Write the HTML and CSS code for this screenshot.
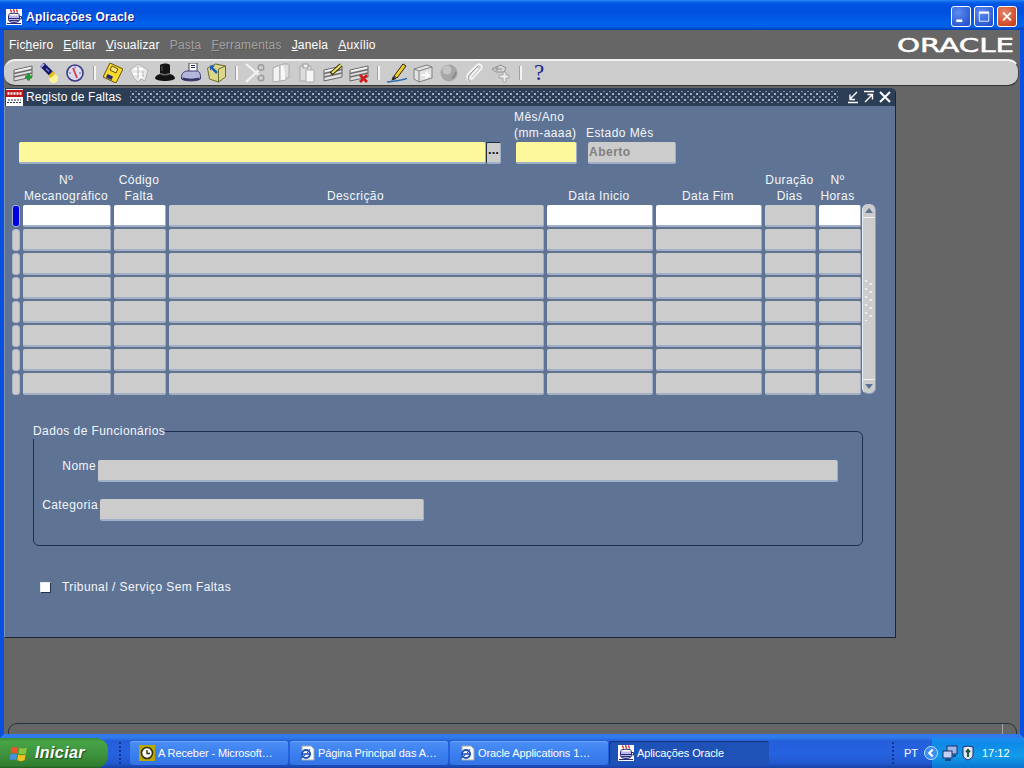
FILE: index.html
```html
<!DOCTYPE html>
<html lang="pt">
<head>
<meta charset="utf-8">
<title>Aplicações Oracle</title>
<link rel="stylesheet" href="styles.css">
</head>
<body>
<svg class="defs" width="0" height="0" aria-hidden="true">
  <defs>
    <symbol id="cup" viewBox="0 0 16 16">
      <rect width="16" height="16" fill="#fff"/>
      <path d="M5 .5c-1 1 1 1.500 0 3M8 0c-1 1 1 2 0 3.500M11 .5c-1 1 1 1.500 0 3" fill="none" stroke="#d01818" stroke-width="1.300"/>
      <ellipse cx="8" cy="6" rx="5.500" ry="1.800" fill="#fff" stroke="#2a2a78"/>
      <path d="M2.500 6.500v4c0 2 2.500 3 5.500 3s5.500-1 5.500-3v-4" fill="#b9b9ea" stroke="#2a2a78"/>
      <path d="M3 9.500h10M3.500 11.500h9" stroke="#2a2a78"/>
      <path d="M13.500 7.500h2V10h-2M1 14.500h14" fill="none" stroke="#2a2a78"/>
    </symbol>
    <symbol id="card" viewBox="0 0 20 20">
      <polygon points="1,7 19,3 19,14 1,18" fill="#e0e0e0" stroke="#68686c"/>
      <path d="M1 10.500 19 6.500M1 14 19 10" stroke="#6d6d72" stroke-width="1.300"/>
      <path d="M2 8 18 4.500" stroke="#fff"/>
    </symbol>
  </defs>
</svg>
<div class="screen">
  <header class="titlebar">
    <svg class="title-icon"><use href="#cup"/></svg>
    <span class="title-text">Aplicações Oracle</span>
    <div class="win-buttons">
      <span class="win-btn"><svg viewBox="0 0 21 21"><rect x="5" y="14" width="7" height="3" fill="#fff"/></svg></span>
      <span class="win-btn"><svg viewBox="0 0 21 21"><path d="M5 5.500h11v10.500H5z" fill="none" stroke="#fff"/><path d="M5 6h11" stroke="#fff" stroke-width="2.500"/></svg></span>
      <span class="win-btn win-close"><svg viewBox="0 0 21 21"><path d="M6 6l9 9M15 6l-9 9" stroke="#fff" stroke-width="2.200"/></svg></span>
    </div>
  </header>

  <div class="app">
    <nav class="menubar">
      <span class="menu-item">Fic<u>h</u>eiro</span>
      <span class="menu-item"><u>E</u>ditar</span>
      <span class="menu-item"><u>V</u>isualizar</span>
      <span class="menu-item menu-off">Pas<u>t</u>a</span>
      <span class="menu-item menu-off"><u>F</u>erramentas</span>
      <span class="menu-item"><u>J</u>anela</span>
      <span class="menu-item"><u>A</u>uxílio</span>
      <svg class="oracle-logo" viewBox="0 0 118 16"><text x="0" y="14.500" textLength="117" lengthAdjust="spacingAndGlyphs" font-family="DejaVu Sans" font-size="19.500" fill="#fff" stroke="#fff" stroke-width=".5">ORACLE</text></svg>
    </nav>

    <div class="toolbar">
      <span class="tool"><svg viewBox="0 0 20 20"><use href="#card"/><path d="M12 14h7M15.500 10.500v7" stroke="#1d9a2c" stroke-width="3"/></svg></span>
      <span class="tool"><svg viewBox="0 0 20 20"><circle cx="14.500" cy="15.500" r="4.500" fill="#f7f39a"/><path d="M3 1.500l10 10" stroke="#18186a" stroke-width="5.500"/><path d="M2 4l3-3" stroke="#a9a9e8" stroke-width="2"/><path d="M7 5.500l3 3" stroke="#7a7ad0" stroke-width="1.500"/><path d="M10.500 14l4.500-4.500" stroke="#e6c020" stroke-width="3.500"/></svg></span>
      <span class="tool"><svg viewBox="0 0 20 20"><circle cx="10" cy="10" r="8" fill="#dadcf0" stroke="#3a3a88" stroke-width="1.600"/><path d="M8 5l4 10" stroke="#d84848" stroke-width="2"/><path d="M4 10h2M14 10h2M10 3.500v2" stroke="#5a5a9c"/></svg></span>
      <span class="sep"></span>
      <span class="tool"><svg viewBox="0 0 20 20"><path d="M7 0l13 6-7 14-13-6z" fill="#f9d92e" stroke="#6a5208"/><path d="M9 3l6 3-2 4-6-3z" fill="#f6e878" stroke="#6a5208"/><path d="M4.500 11l5.500 2.500-1.500 3.500-5.500-2.500z" fill="#29297a"/></svg></span>
      <span class="tool"><svg viewBox="0 0 20 20"><path d="M1 7l8-6 10 6-3 11-4-2-3 3-4-4z" fill="#e8e8e8" stroke="#b4b4b4"/><path d="M5 6h9M4 11h11M9 14h5" stroke="#fff" stroke-width="2"/><path d="M9 3v12M14 8v6" stroke="#b0b0b0"/></svg></span>
      <span class="tool"><svg viewBox="0 0 20 20"><path d="M5 2c3-2 8-2 10 0v9c3 1 5 2.500 5 4 0 4-20 4-20 0 0-1.500 2-3 5-4z" fill="#141414"/><path d="M5 10.500c3 1.500 7 1.500 10 0" stroke="#666" stroke-width="1.500" fill="none"/><path d="M7 3v5" stroke="#444" stroke-width="1.500"/></svg></span>
      <span class="tool"><svg viewBox="0 0 20 20"><path d="M8 0h8v9H8z" fill="#fff" stroke="#444"/><path d="M10 2.500h4M10 4.500h4" stroke="#29297a"/><path d="M0.500 14c0-4 3-6 6-6h9c3 0 4 3 4 6v2c-3 2.500-16 2.500-19 0z" fill="#b4b6dc" stroke="#3a3a70"/><path d="M1.500 15.500c4 1.500 13 1.500 17 0" stroke="#303064" stroke-width="2" fill="none"/></svg></span>
      <span class="tool"><svg viewBox="0 0 20 20"><path d="M0.500 5l8-4 10 2v11l-7 5-9-3z" fill="#dcd88a" stroke="#6c6c2c"/><path d="M11.500 19V6l7-3" fill="none" stroke="#6c6c2c"/><path d="M4 4l6 6" stroke="#1f5fb0" stroke-width="2.500"/><path d="M8 2.500h-5v5z" fill="#1f5fb0"/></svg></span>
      <span class="sep"></span>
      <span class="tool"><svg viewBox="0 0 20 20"><path d="M1 1l14 12M1 19L15 6" stroke="#f2f2f2" stroke-width="2.200"/><circle cx="16" cy="15" r="2.800" fill="none" stroke="#9c9c9c" stroke-width="1.500"/><circle cx="16" cy="4.500" r="2.800" fill="none" stroke="#9c9c9c" stroke-width="1.500"/></svg></span>
      <span class="tool"><svg viewBox="0 0 20 20"><path d="M2 5l7-3v16l-7 1z" fill="#f2f2f2" stroke="#aaa"/><path d="M9 2l6-1v16l-6 1z" fill="#f8f8f8" stroke="#aaa"/><path d="M12 1h6v14h-3" fill="#ddd" stroke="#aaa"/></svg></span>
      <span class="tool"><svg viewBox="0 0 20 20"><path d="M3 3h11v15H3z" fill="#dcdcdc" stroke="#aaa"/><path d="M6 1h5v4H6z" fill="#eee" stroke="#999"/><path d="M9 7h8v12H9z" fill="#f6f6f6" stroke="#aaa"/></svg></span>
      <span class="tool"><svg viewBox="0 0 20 20"><use href="#card"/><path d="M8 11l10-9" stroke="#33330a" stroke-width="4"/><path d="M9 10l9-8" stroke="#f2e36a" stroke-width="2"/></svg></span>
      <span class="tool"><svg viewBox="0 0 20 20"><use href="#card"/><path d="M11 12l7 7M18 12l-7 7" stroke="#d01c1c" stroke-width="2.800"/></svg></span>
      <span class="sep"></span>
      <span class="tool"><svg viewBox="0 0 20 20"><path d="M7 13L16 1l3 2-9 12z" fill="#f0cb30" stroke="#2a2608"/><path d="M6 13l3.500 3-5 1.500z" fill="#222"/><path d="M0 19c6-1 13-1 20-3.500" stroke="#2d6bb0" stroke-width="1.400" fill="none"/></svg></span>
      <span class="tool"><svg viewBox="0 0 20 20"><path d="M1 6l13-4 5 2v11l-13 4-5-3z" fill="#e2e2e2" stroke="#808080"/><path d="M1 6l5 2 13-4M6 8v11" fill="none" stroke="#808080"/><path d="M8 12h8M12.500 9l3.500 3-3.500 3" fill="none" stroke="#fff" stroke-width="1.600"/></svg></span>
      <span class="tool"><svg viewBox="0 0 20 20"><circle cx="10" cy="10" r="8.500" fill="#a6a6a6"/><circle cx="8" cy="7" r="4.500" fill="#c4c4c4"/><path d="M13 15c2-1 3.500-3 3.500-6" stroke="#8a8a8a" stroke-width="2" fill="none"/></svg></span>
      <span class="tool"><svg viewBox="0 0 20 20"><path d="M4 18c-4-3-1-7 1-9l7-7c3-2 6 1 4 4l-8 9c-2 2-4 0-2-2l7-8" fill="none" stroke="#f4f4f4" stroke-width="1.800"/><path d="M5 19c-3-2-2-6 1-9l7-7" fill="none" stroke="#9c9c9c"/></svg></span>
      <span class="tool"><svg viewBox="0 0 20 20"><path d="M1 6l9-4 5 3-2 4H5z" fill="#d6d6d6" stroke="#8e8e8e"/><path d="M12 9h3v3h3v3h-3v4h-3v-4H8v-3h4z" fill="#ebebeb" stroke="#a4a4a4"/><path d="M4 6h7M6 3v5" stroke="#8e8e8e"/></svg></span>
      <span class="sep"></span>
      <span class="tool tool-help">?</span>
    </div>

    <section class="form-window">
      <div class="form-title">
        <svg class="form-icon" viewBox="0 0 17 17"><rect width="17" height="17" fill="#fff"/><rect y="1" width="17" height="7" fill="#c01818"/><path d="M1.500 4.500h14" stroke="#fff" stroke-width="2.500" stroke-dasharray="2 1"/><path d="M2 11h13M1 13.500h15" stroke="#30304a" stroke-dasharray="2 1"/></svg>
        <span class="form-caption">Registo de Faltas</span>
        <span class="form-dots"></span>
        <span class="form-ctl"><svg viewBox="0 0 16 14"><path d="M3 12.500h10M12 2 5.500 8.500M5 4.500v5h5" fill="none" stroke="#fff" stroke-width="1.400"/></svg></span>
        <span class="form-ctl"><svg viewBox="0 0 16 14"><path d="M3 1.500h10M4 12l7-7M6.500 4.500H11.500v5" fill="none" stroke="#fff" stroke-width="1.400"/></svg></span>
        <span class="form-ctl"><svg viewBox="0 0 16 14"><path d="M3 2l10 10M13 2 3 12" stroke="#fff" stroke-width="2"/></svg></span>
      </div>

      <div class="form-body">
        <div class="top-row">
          <div class="fld fld-req fld-main"></div>
          <div class="lov"><span class="lov-dots">...</span></div>
          <div class="stack stack-month">
            <span class="lbl">Mês/Ano</span>
            <span class="lbl">(mm-aaaa)</span>
            <div class="fld fld-req fld-month"></div>
          </div>
          <div class="stack stack-state">
            <span class="lbl">Estado Mês</span>
            <div class="fld fld-state">Aberto</div>
          </div>
        </div>

        <div class="grid">
          <div class="hd"></div>
          <div class="hd">Nº<br>Mecanográfico</div>
          <div class="hd">Código<br>Falta</div>
          <div class="hd">Descrição</div>
          <div class="hd">Data Inicio</div>
          <div class="hd">Data Fim</div>
          <div class="hd">Duração<br>Dias</div>
          <div class="hd hd-last">Nº<br>Horas</div>
          <div class="hd"></div>

          <div class="mark mark-on"></div><div class="fld fld-in"></div><div class="fld fld-in"></div><div class="fld"></div><div class="fld fld-in"></div><div class="fld fld-in"></div><div class="fld"></div><div class="fld fld-in"></div>
          <div class="scroll">
            <div class="scroll-btn scroll-up"><span class="arrow-up"></span></div>
            <div class="scroll-track"><span class="grip"></span></div>
            <div class="scroll-btn scroll-down"><span class="arrow-down"></span></div>
          </div>
          <div class="mark"></div><div class="fld"></div><div class="fld"></div><div class="fld"></div><div class="fld"></div><div class="fld"></div><div class="fld"></div><div class="fld"></div>
          <div class="mark"></div><div class="fld"></div><div class="fld"></div><div class="fld"></div><div class="fld"></div><div class="fld"></div><div class="fld"></div><div class="fld"></div>
          <div class="mark"></div><div class="fld"></div><div class="fld"></div><div class="fld"></div><div class="fld"></div><div class="fld"></div><div class="fld"></div><div class="fld"></div>
          <div class="mark"></div><div class="fld"></div><div class="fld"></div><div class="fld"></div><div class="fld"></div><div class="fld"></div><div class="fld"></div><div class="fld"></div>
          <div class="mark"></div><div class="fld"></div><div class="fld"></div><div class="fld"></div><div class="fld"></div><div class="fld"></div><div class="fld"></div><div class="fld"></div>
          <div class="mark"></div><div class="fld"></div><div class="fld"></div><div class="fld"></div><div class="fld"></div><div class="fld"></div><div class="fld"></div><div class="fld"></div>
          <div class="mark"></div><div class="fld"></div><div class="fld"></div><div class="fld"></div><div class="fld"></div><div class="fld"></div><div class="fld"></div><div class="fld"></div>
        </div>

        <fieldset class="group">
          <legend class="group-title">Dados de Funcionários</legend>
          <div class="group-row">
            <span class="lbl row-lbl row-lbl-nome">Nome</span>
            <div class="fld fld-nome"></div>
          </div>
          <div class="group-row group-row-cat">
            <span class="lbl row-lbl row-lbl-cat">Categoria</span>
            <div class="fld fld-cat"></div>
          </div>
        </fieldset>

        <div class="check-row">
          <span class="check"></span>
          <span class="lbl">Tribunal / Serviço Sem Faltas</span>
        </div>
      </div>
    </section>

    <div class="statusbar"><span class="status-cell"></span></div>
  </div>

  <footer class="taskbar">
    <div class="start">
      <svg class="start-logo" viewBox="0 0 18 18"><path d="M1 4c2-1.500 4-1.500 7-.5L7 9C4.500 8 3 8 .5 9z" fill="#e8562a"/><path d="M9 3.500c2.500 1 4.500 1 7 0L15 9c-2.500 1-4.500 1-7 0z" fill="#8cc63f"/><path d="M.2 10c2.500-1 4-1 6.600 0l-1 5.500C3.500 14.500 2 14.500 0 15.500z" fill="#4a8fe0"/><path d="M7.800 10c2.500 1 4.500 1 7 0l-1 5.500c-2.500 1-4.500 1-7 0z" fill="#f6c21c"/></svg>
      <span class="start-text">Iniciar</span>
    </div>
    <span class="grab"></span>
    <div class="task">
      <svg class="task-icon" viewBox="0 0 16 16"><rect width="16" height="16" fill="#b8a800"/><circle cx="8" cy="8" r="5.500" fill="#fff" stroke="#303010" stroke-width="1.600"/><path d="M8 5v3.500h3" fill="none" stroke="#303010" stroke-width="1.400"/></svg>
      <span class="task-text">A Receber - Microsoft…</span>
    </div>
    <div class="task">
      <svg class="task-icon" viewBox="0 0 16 16"><path d="M3 1h9l3 3v11H3z" fill="#fff" stroke="#9aa"/><circle cx="7" cy="9" r="4" fill="none" stroke="#1f4fb8" stroke-width="2"/><path d="M3 9h7" stroke="#1f4fb8" stroke-width="1.500"/><path d="M1 13c2 0 8-5 10-9" fill="none" stroke="#1f4fb8"/></svg>
      <span class="task-text">Página Principal das A…</span>
    </div>
    <div class="task">
      <svg class="task-icon" viewBox="0 0 16 16"><path d="M3 1h9l3 3v11H3z" fill="#fff" stroke="#9aa"/><circle cx="7" cy="9" r="4" fill="none" stroke="#1f4fb8" stroke-width="2"/><path d="M3 9h7" stroke="#1f4fb8" stroke-width="1.500"/><path d="M1 13c2 0 8-5 10-9" fill="none" stroke="#1f4fb8"/></svg>
      <span class="task-text">Oracle Applications 1…</span>
    </div>
    <div class="task task-on">
      <svg class="task-icon"><use href="#cup"/></svg>
      <span class="task-text">Aplicações Oracle</span>
    </div>
    <span class="grab grab-right"></span>
    <span class="lang">PT</span>
    <div class="tray">
      <span class="chevron"><svg viewBox="0 0 16 16"><circle cx="8" cy="8" r="7.500" fill="#3b8ff0" stroke="#cfe4ff"/><path d="M10 4 6 8l4 4" fill="none" stroke="#fff" stroke-width="2.400"/></svg></span>
      <svg class="tray-icon" viewBox="0 0 16 16"><rect x="5" y="1" width="10" height="8" fill="#9fb7e8" stroke="#1c2c6c"/><rect x="1" y="6" width="9" height="7" fill="#c3d2f2" stroke="#1c2c6c"/><path d="M3 15h6M11 11h3" stroke="#1c2c6c" stroke-width="1.500"/></svg>
      <svg class="tray-icon tray-shield" viewBox="0 0 12 16"><path d="M1 2l5-1 5 1v8c0 3-3 4-5 5-2-1-5-2-5-5z" fill="#dfe6f5" stroke="#1c2c6c"/><path d="M6 4v8M4 7l2-2 2 2" stroke="#1c5030" stroke-width="1.800" fill="none"/></svg>
      <span class="clock">17:12</span>
    </div>
  </footer>
</div>
</body>
</html>
```
FILE: styles.css
```css
* { box-sizing: border-box; }
html, body { margin: 0; padding: 0; }
body { font-family: "Liberation Sans", Arial, sans-serif; font-size: 12px; color: #fff; overflow: hidden; }
.defs { position: absolute; }

.screen { width: 1024px; height: 768px; display: flex; flex-direction: column; overflow: hidden; background: #666; }

/* XP title bar */
.titlebar {
  height: 30px; flex: none; display: flex; align-items: center; padding: 3px 7px 0 6px;
  background: linear-gradient(#2d8bf5 0, #0a62ea 2px, #0052e2 5px, #0050dd 12px, #0060ea 22px, #0062ea 26px, #0049c8 29px, #0040b8 30px);
}
.title-icon { width: 16px; height: 16px; flex: none; }
.title-text { margin-left: 4px; font-weight: bold; font-size: 12px; letter-spacing: .25px; color: #fff; text-shadow: 1px 1px #0f1089; }
.win-buttons { margin-left: auto; display: flex; gap: 3px; margin-top: -1px; }
.win-btn { width: 20px; height: 21px; border: 1px solid #fff; border-radius: 3px; background: radial-gradient(circle at 35% 30%, #5d8cf0, #2352d0 85%); display: block; }
.win-btn svg { display: block; width: 18px; height: 19px; }
.win-close { background: radial-gradient(circle at 35% 30%, #e8866a, #c8401c 85%); }

/* application frame */
.app {
  flex: 1; min-height: 0; display: flex; flex-direction: column; background: #666;
  border-left: 4px solid #0a50e0; border-right: 4px solid #0a50e0; border-bottom: 4px solid #2f7bec;
}

.menubar { height: 29px; flex: none; display: flex; align-items: center; padding: 1px 5px 0 5px; gap: 10px; position: relative; }
.menu-item { letter-spacing: .2px; color: #fff; }
.menu-off { color: #a2a2a2; text-shadow: 1px 1px 0 #585858; }
.oracle-logo { margin-left: auto; width: 118px; height: 16px; flex: none; overflow: visible; }

.toolbar {
  height: 27px; flex: none; display: flex; align-items: center; margin-right: 1px; padding-left: 6px;
  background: #ccc; border-top: 2px solid #f2f2f2; border-bottom: 1px solid #333; border-right: 1px solid #444;
  border-radius: 11px;
}
.tool { width: 26px; height: 24px; display: flex; align-items: center; justify-content: center; flex: none; }
.tool svg { width: 20px; height: 20px; display: block; }
.tool-help { font-family: "Liberation Serif", serif; font-size: 23px; color: #1f1f8e; }
.sep { width: 12px; height: 14px; flex: none; position: relative; }
.sep::before { content: ""; display: block; margin: 0 auto 0 5px; width: 2px; height: 14px; background: #f4f4f4; border-left: 1px solid #a0a0a0; }

/* MDI form window */
.form-window {
  width: 892px; height: 550px; margin-top: 2px; flex: none; display: flex; flex-direction: column;
  background: #5f7495; border-right: 1px solid #20242c; border-bottom: 1px solid #20242c; border-left: 1px solid #7f93b0;
  border-top-right-radius: 5px;
}
.form-title { height: 18px; flex: none; display: flex; align-items: center; background: #2c3d56; padding-left: 1px; padding-right: 2px; border-top-right-radius: 5px; }
.form-icon { width: 17px; height: 17px; flex: none; }
.form-caption { margin-left: 3px; letter-spacing: .12px; color: #fff; white-space: nowrap; }
.form-dots {
  flex: 1; height: 12px; margin: 0 7px 0 9px;
  background-image: radial-gradient(circle, #a8b4c4 .7px, transparent 1.100px), radial-gradient(circle, #7f8da2 .7px, transparent 1.100px);
  background-size: 6px 6px; background-position: 0 0, 3px 3px;
}
.form-ctl { width: 16px; height: 14px; flex: none; display: block; }
.form-ctl svg { display: block; width: 16px; height: 14px; }

.form-body { flex: 1; padding: 2px 0 0 7px; display: flex; flex-direction: column; }
.lbl { line-height: 16px; letter-spacing: .42px; color: #f4f6fa; white-space: nowrap; }

.top-row { display: flex; align-items: flex-end; height: 56px; padding-left: 7px; flex: none; }
.fld { height: 22px; background: #ccc; border-radius: 2px; border-bottom: 2px solid #9fb0c8; border-right: 1px solid #9fb0c8; box-shadow: 0 1px 0 #66728a; }
.fld-req { background: #fdf89b; box-shadow: none; }
.fld-in { background: #fff; }
.fld-main { width: 467px; margin-bottom: 0; box-shadow: none; }
.lov { width: 15px; height: 22px; background: #ccc; border: 1px solid #1f2c44; border-right-color: #9fb0c8; border-bottom: 2px solid #9fb0c8; border-radius: 2px; display: flex; justify-content: center; align-items: center; }
.lov-dots { font-weight: bold; font-size: 13px; line-height: 10px; color: #111; letter-spacing: 0; margin-top: -5px; }
.stack { display: flex; flex-direction: column; }
.stack-month { width: 62px; margin-left: 15px; }
.stack-month .lbl { margin-left: -2px; }
.fld-month { width: 61px; margin-top: 1px; }
.stack-state { margin-left: 10px; }
.stack-state .lbl { margin-left: -2px; }
.fld-state { width: 88px; margin-top: 1px; font-weight: bold; color: #808080; line-height: 20px; padding-left: 1px; letter-spacing: .5px; box-shadow: none; }

/* multi-record block */
.grid {
  display: grid; margin-top: 7px; row-gap: 2px; flex: none;
  grid-template-columns: 8px 88px 52px 375px 106px 106px 51px 42px 12px;
  grid-template-rows: 32px repeat(8, 22px); column-gap: 3px;
}
.hd { align-self: end; text-align: center; line-height: 16px; letter-spacing: .42px; color: #f4f6fa; padding-right: 2px; white-space: nowrap; margin-bottom: -1px; }
.hd-last { padding-right: 5px; }
.mark { background: #ccc; border: 1px solid #a9b8d0; border-radius: 3px; box-shadow: 0 1px 0 #66728a; }
.mark-on { background: #0000e0; }
.scroll {
  grid-column: 9; grid-row: 2 / 10; margin-left: -2px; margin-top: -1px; margin-bottom: 1px; width: 14px;
  background: #ccc; border-radius: 6px; display: flex; flex-direction: column; border-left: 1px solid #e8ecf2; border-right: 1px solid #8ea0bb; border-bottom: 1px solid #8ea0bb;
}
.scroll-btn { height: 14px; flex: none; display: flex; align-items: center; justify-content: center; }
.scroll-up { border-bottom: 1px solid #f0f0f0; }
.scroll-down { border-top: 1px solid #f0f0f0; }
.arrow-up { width: 0; height: 0; border: 4px solid transparent; border-top: 0; border-bottom: 5px solid #5f7495; }
.arrow-down { width: 0; height: 0; border: 4px solid transparent; border-bottom: 0; border-top: 5px solid #5f7495; }
.scroll-track { flex: 1; display: flex; align-items: center; justify-content: center; }
.grip {
  width: 9px; height: 44px;
  background-image: radial-gradient(circle, #fff .9px, transparent 1.200px), radial-gradient(circle, #fff .9px, transparent 1.200px);
  background-size: 9px 8px; background-position: -3.500px 0, 1.500px 3px; background-repeat: repeat;
}

/* group box */
.group { margin: 28px 0 0 21px; padding: 21px 0 0 0; width: 830px; height: 123px; border: 1px solid #1e2f50; border-radius: 6px; flex: none; min-width: 0; }
.group-title { padding: 0; margin: 0 0 0 -1px; line-height: 16px; letter-spacing: .42px; color: #f4f6fa; }
.group-row { display: flex; }
.group-row-cat { margin-top: 17px; }
.row-lbl { line-height: 12px; text-align: right; }
.row-lbl-nome { width: 62px; margin-right: 2px; }
.row-lbl-cat { width: 64px; margin-right: 2px; }
.fld-nome { width: 740px; box-shadow: none; }
.fld-cat { width: 324px; box-shadow: none; }

.check-row { display: flex; align-items: center; margin: 33px 0 0 28px; flex: none; }
.check { width: 11px; height: 11px; background: #fff; border: 1px solid #e6ebf2; border-bottom-color: #27324a; border-right-color: #27324a; flex: none; margin-right: 11px; }

.statusbar { margin: auto 3px 0 4px; height: 11px; flex: none; border: 1px solid #27323e; border-bottom: 0; border-radius: 9px 9px 0 0; display: flex; justify-content: flex-end; }
.status-cell { width: 14px; border-left: 1px solid #a4a4a4; }

/* XP taskbar */
.taskbar {
  height: 30px; flex: none; display: flex; align-items: center;
  background: linear-gradient(#2f78e6 0, #245edb 3px, #2663e0 16px, #2058cf 25px, #1941a5 30px);
}
.start {
  width: 108px; height: 30px; flex: none; display: flex; align-items: center; padding-left: 10px;
  background: linear-gradient(#3a8e3a 0, #47a447 4px, #3c8f3c 18px, #2f7d2f 28px, #1f5f1f 30px); border-radius: 0 12px 12px 0;
}
.start-logo { width: 19px; height: 19px; flex: none; }
.start-text { margin-left: 6px; font-size: 16px; font-weight: bold; font-style: italic; letter-spacing: .4px; color: #fff; text-shadow: 1px 1px 1px #1d4d1d; }
.grab { width: 4px; height: 24px; margin: 0 8px 0 10px; flex: none; background-image: radial-gradient(circle, #14368a 1.200px, transparent 1.500px); background-size: 4px 4px; }
.task {
  width: 158px; height: 24px; margin-right: 2px; flex: none; display: flex; align-items: center; padding-left: 9px;
  background: linear-gradient(#4b8ef5, #3a7eee 60%, #3374e4); border-radius: 3px; box-shadow: inset 0 1px 0 #6aa4fa;
}
.task-icon { width: 16px; height: 16px; flex: none; }
.task-text { margin-left: 3px; font-size: 11px; letter-spacing: -.1px; color: #fff; white-space: nowrap; overflow: hidden; }
.task-on { width: 160px; margin-left: -1px; background: #1e52b7; box-shadow: inset 1px 1px 1px #15347f; }
.grab-right { margin: 0 9px 0 auto; }
.lang { font-size: 11px; color: #fff; margin-right: 14px; }
.tray {
  width: 92px; height: 30px; flex: none; display: flex; align-items: center; padding-left: 0;
  background: linear-gradient(#1a8cee, #0e8ae8 20%, #119ce8 60%, #0d74d0 100%);
}
.chevron { width: 14px; height: 14px; display: block; flex: none; margin-left: -8px; }
.chevron svg { display: block; width: 14px; height: 14px; }
.tray-icon { width: 16px; height: 16px; flex: none; margin-left: 4px; }
.tray-shield { width: 12px; margin-left: 4px; }
.clock { margin-left: 8px; font-size: 11px; color: #fff; }
```
